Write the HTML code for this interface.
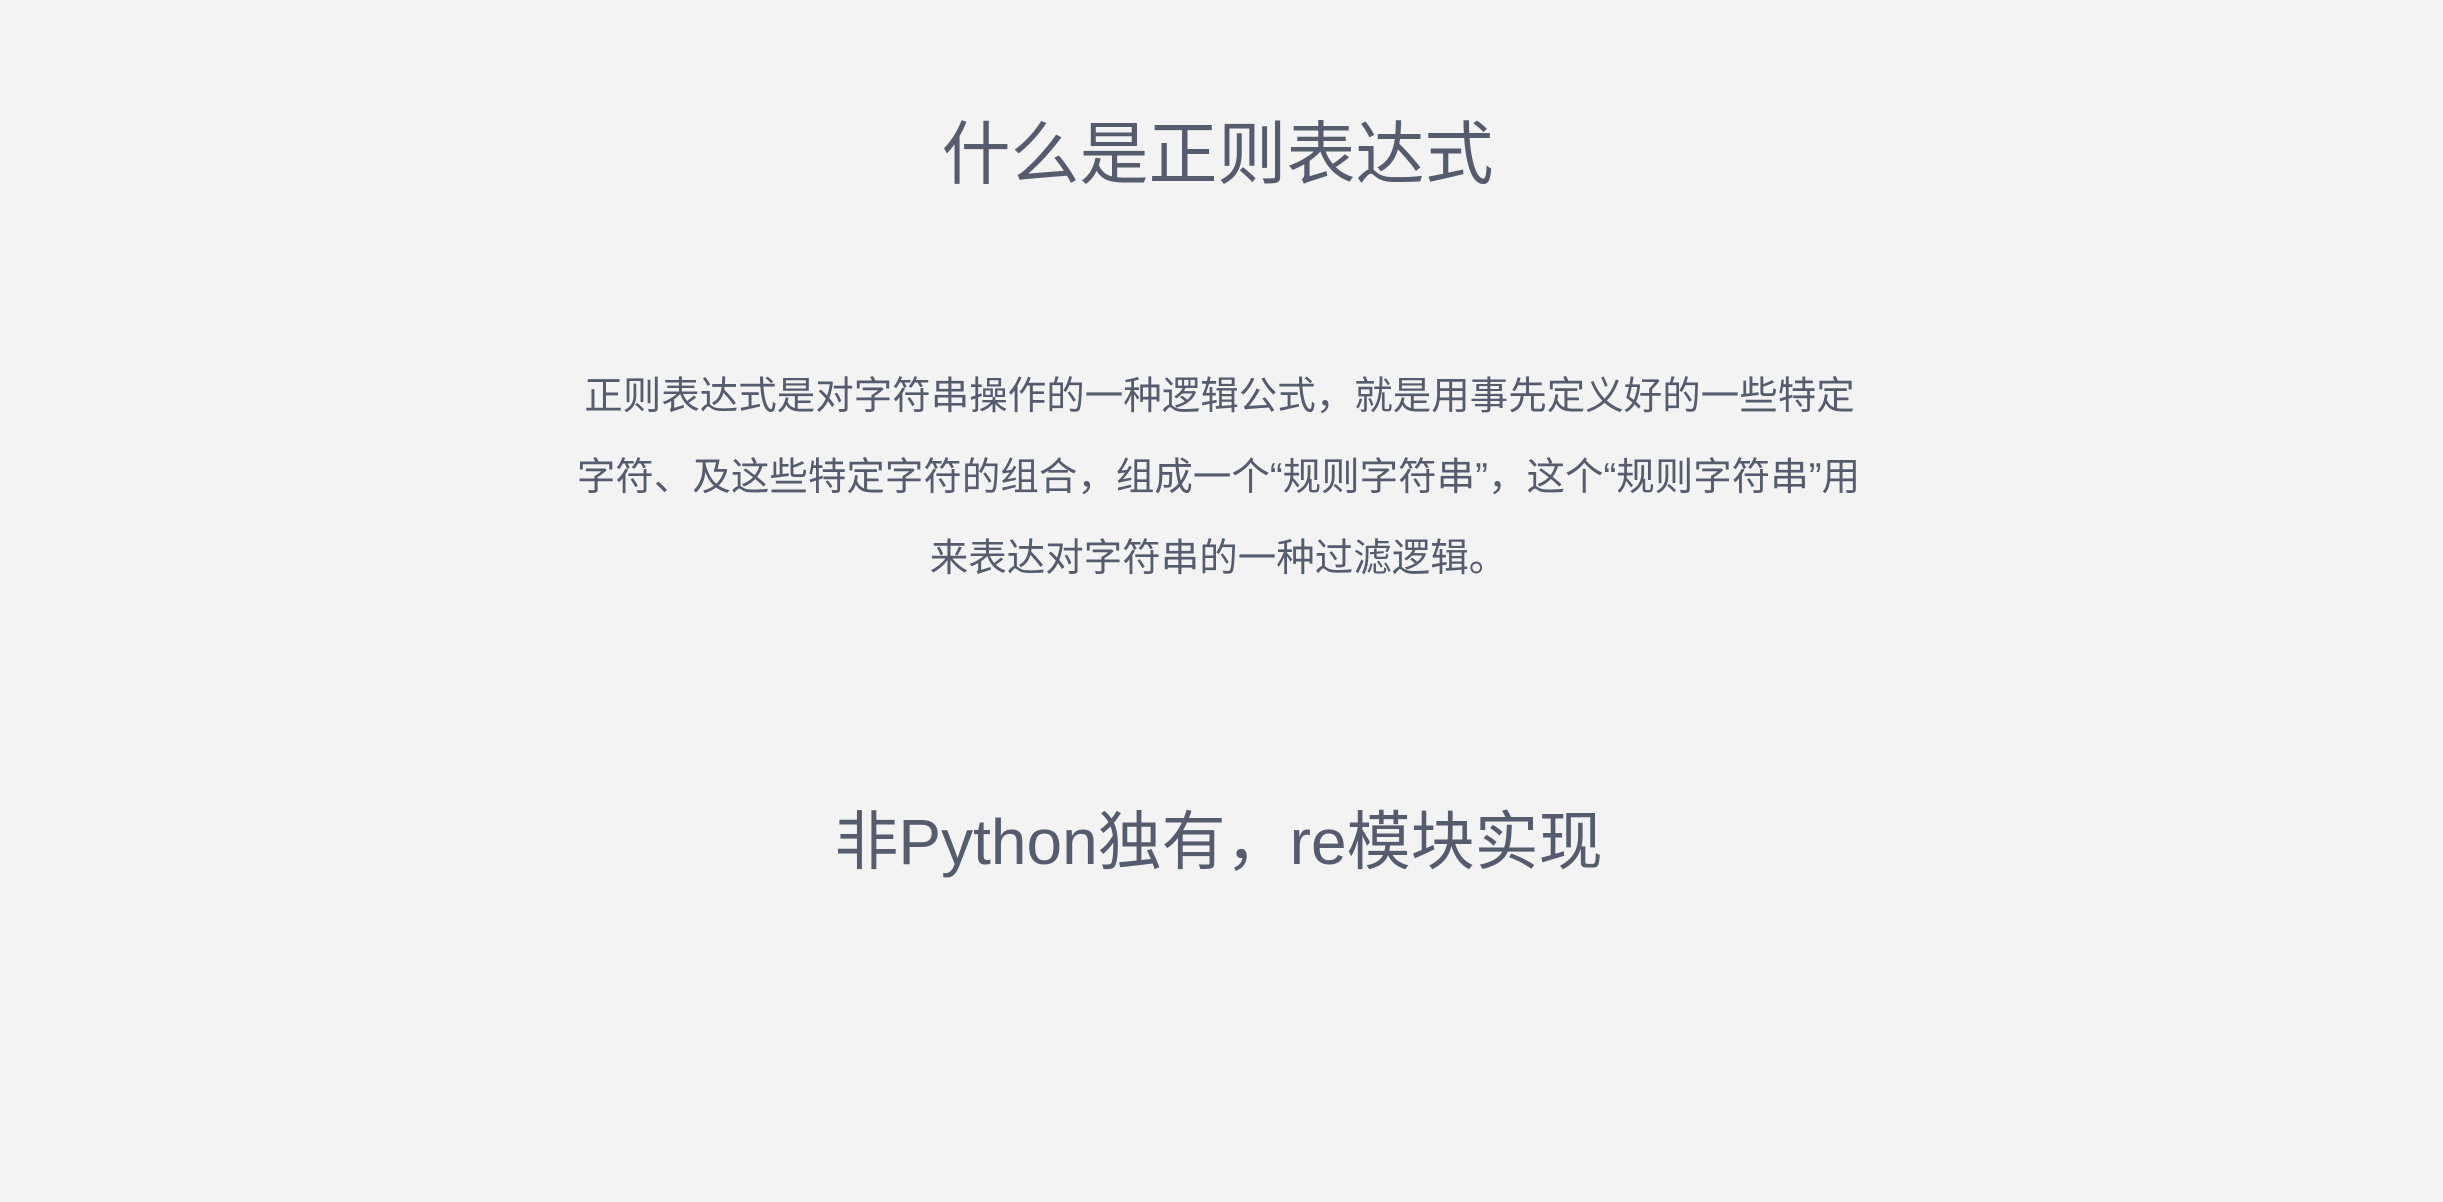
<!DOCTYPE html>
<html><head><meta charset="utf-8"><style>
html,body{margin:0;padding:0;}
body{width:2443px;height:1202px;background:#f3f3f4;position:relative;overflow:hidden;color:#565b6e;font-family:"Liberation Sans","Noto Sans CJK SC",sans-serif;}
.t{position:absolute;left:0;width:2443px;text-align:center;white-space:nowrap;}
</style></head><body>
<div class="t" style="top:110px;font-size:69px;line-height:90px;left:-4px;">什么是正则表达式</div>
<div class="t" style="top:356px;font-size:38.5px;line-height:81px;left:-2px;">正则表达式是对字符串操作的一种逻辑公式，就是用事先定义好的一些特定</div>
<div class="t" style="top:437px;font-size:38.5px;line-height:81px;left:-3px;">字符、及这些特定字符的组合，组成一个“规则字符串”，这个“规则字符串”用</div>
<div class="t" style="top:518px;font-size:38.5px;line-height:81px;left:-3px;">来表达对字符串的一种过滤逻辑。</div>
<div class="t" style="top:802px;font-size:64px;line-height:80px;left:-3px;">非Python独有，re模块实现</div>
</body></html>
